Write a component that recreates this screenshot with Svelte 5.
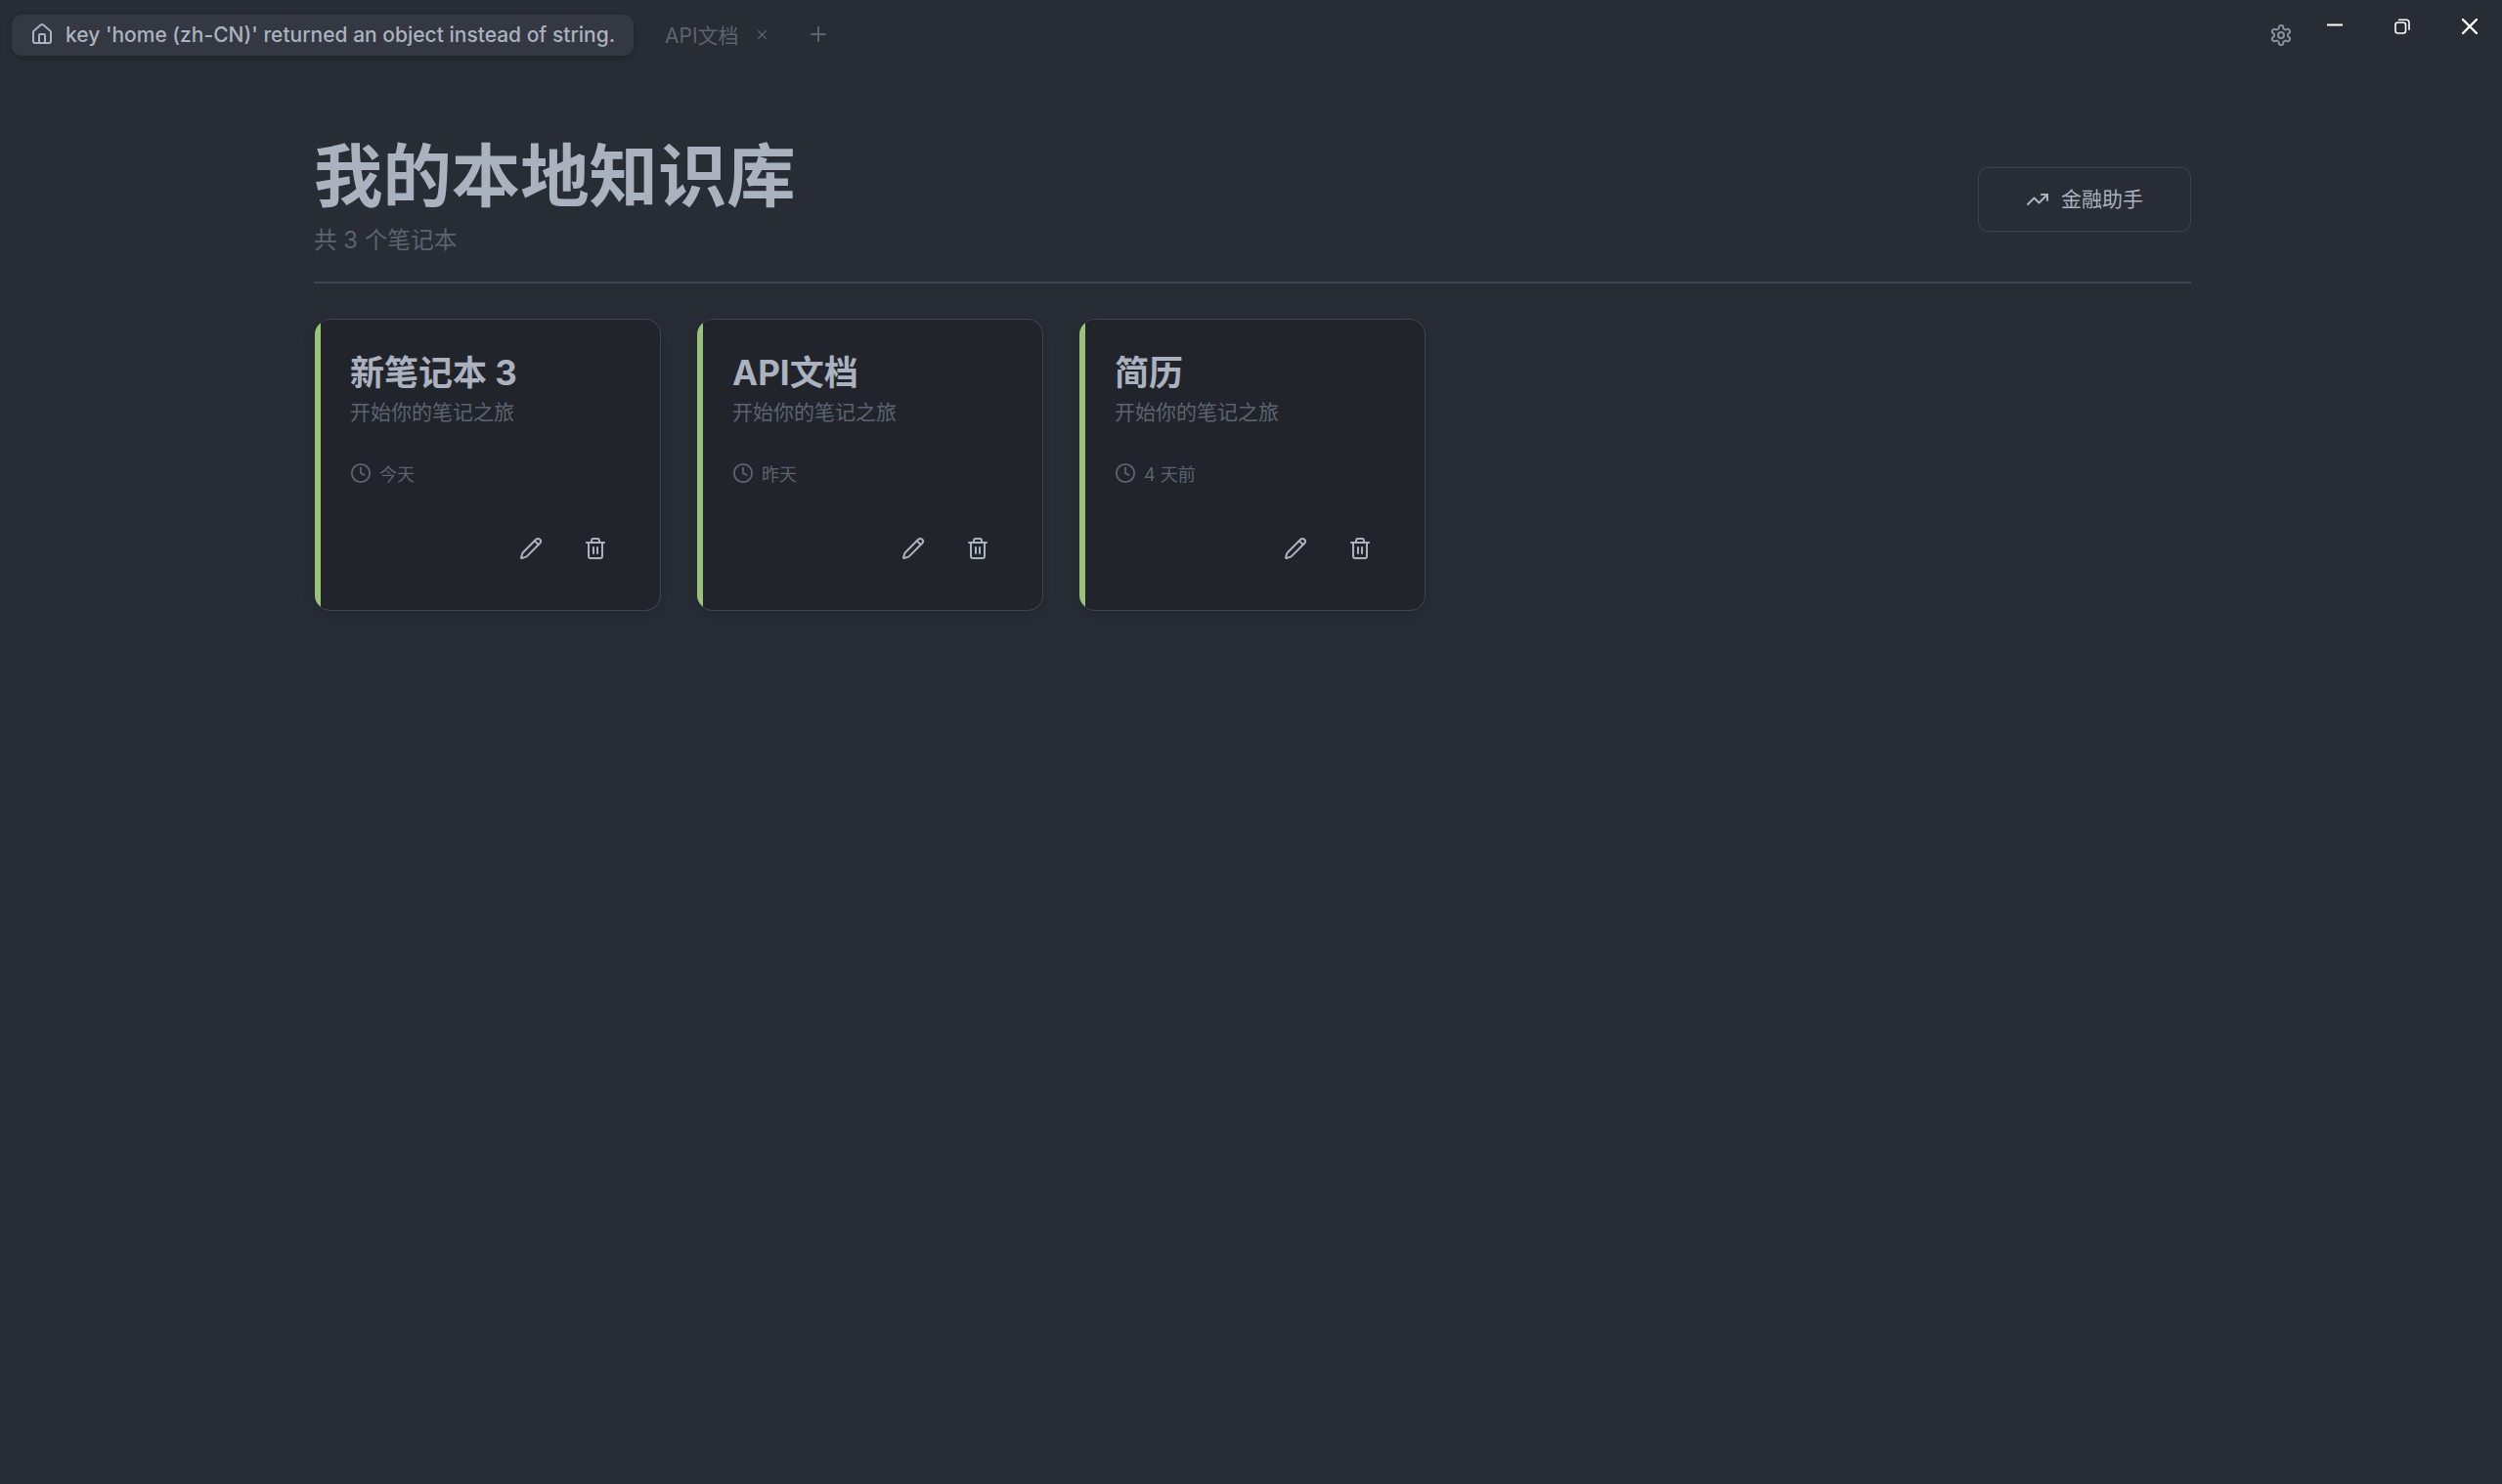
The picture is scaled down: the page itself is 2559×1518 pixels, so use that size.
<script>
  const notebooks = [
    { title: "新笔记本 3", desc: "开始你的笔记之旅", time: "今天" },
    { title: "API文档", desc: "开始你的笔记之旅", time: "昨天" },
    { title: "简历", desc: "开始你的笔记之旅", time: "4 天前" }
  ];
</script>

<div class="window">
  <header class="titlebar">
    <div class="tabs">
      <div class="tab active">
        <svg class="home" viewBox="0 0 24 24"><path d="M15 21v-8a1 1 0 0 0-1-1h-4a1 1 0 0 0-1 1v8" /><path d="M3 10a2 2 0 0 1 .709-1.528l7-5.999a2 2 0 0 1 2.582 0l7 5.999A2 2 0 0 1 21 10v9a2 2 0 0 1-2 2H5a2 2 0 0 1-2-2z" /></svg>
        <span>key 'home (zh-CN)' returned an object instead of string.</span>
      </div>
      <div class="tab other">
        <span>API文档</span>
        <svg class="tabx" viewBox="0 0 24 24"><path d="M18 6 6 18" /><path d="m6 6 12 12" /></svg>
      </div>
      <svg class="plus" viewBox="0 0 24 24"><path d="M5 12h14" /><path d="M12 5v14" /></svg>
    </div>
    <div class="controls">
      <svg class="gear" viewBox="0 0 24 24"><path d="M12.22 2h-.44a2 2 0 0 0-2 2v.18a2 2 0 0 1-1 1.73l-.43.25a2 2 0 0 1-2 0l-.15-.08a2 2 0 0 0-2.73.73l-.22.38a2 2 0 0 0 .73 2.73l.15.1a2 2 0 0 1 1 1.72v.51a2 2 0 0 1-1 1.74l-.15.09a2 2 0 0 0-.73 2.73l.22.38a2 2 0 0 0 2.73.73l.15-.08a2 2 0 0 1 2 0l.43.25a2 2 0 0 1 1 1.73V20a2 2 0 0 0 2 2h.44a2 2 0 0 0 2-2v-.18a2 2 0 0 1 1-1.73l.43-.25a2 2 0 0 1 2 0l.15.08a2 2 0 0 0 2.73-.73l.22-.39a2 2 0 0 0-.73-2.73l-.15-.08a2 2 0 0 1-1-1.74v-.5a2 2 0 0 1 1-1.74l.15-.09a2 2 0 0 0 .73-2.73l-.22-.38a2 2 0 0 0-2.73-.73l-.15.08a2 2 0 0 1-2 0l-.43-.25a2 2 0 0 1-1-1.73V4a2 2 0 0 0-2-2z" /><circle cx="12" cy="12" r="3" /></svg>
      <svg class="win min" viewBox="0 0 16 16"><path d="M0.5 6.5h15" /></svg>
      <svg class="win restore" viewBox="0 0 16 16"><rect x="1" y="4" width="10.5" height="11" rx="2.5" /><path d="M4.5 1.2h7.5a3 3 0 0 1 3 3v7" /></svg>
      <svg class="win close" viewBox="0 0 16 16"><path d="M1 1l14 14" /><path d="M15 1 1 15" /></svg>
    </div>
  </header>

  <main class="content">
    <div class="head">
      <div>
        <h1>我的本地知识库</h1>
        <p class="count">共 3 个笔记本</p>
      </div>
      <button class="finance">
        <svg viewBox="0 0 24 24"><path d="M22 7 13.5 15.5 8.5 10.5 2 17" /><path d="M16 7h6v6" /></svg>
        <span>金融助手</span>
      </button>
    </div>

    <div class="grid">
      {#each notebooks as nb}
        <div class="card">
          <h2>{nb.title}</h2>
          <p class="desc">{nb.desc}</p>
          <div class="meta">
            <svg viewBox="0 0 24 24"><circle cx="12" cy="12" r="10" /><path d="M12 6v6l4 2" /></svg>
            <span>{nb.time}</span>
          </div>
          <div class="actions">
            <svg class="pencil" viewBox="0 0 24 24"><path d="M21.174 6.812a1 1 0 0 0-3.986-3.987L3.842 16.174a2 2 0 0 0-.5.83l-1.321 4.352a.5.5 0 0 0 .623.622l4.353-1.32a2 2 0 0 0 .83-.497z" /><path d="m16.2 4.6 3.2 3.2" /></svg>
            <svg viewBox="0 0 24 24"><path d="M3 6h18" /><path d="M19 6v14a2 2 0 0 1-2 2H7a2 2 0 0 1-2-2V6" /><path d="M8 6V4a2 2 0 0 1 2-2h4a2 2 0 0 1 2 2v2" /><path d="M10 11v6" /><path d="M14 11v6" /></svg>
          </div>
        </div>
      {/each}
    </div>
  </main>
</div>

<style>
  :global(body) {
    margin: 0;
    background: #282c34;
  }

  .window {
    width: 2559px;
    height: 1518px;
    background: #282c34;
    color: #abb2bf;
    font-family: Inter, "Noto Sans CJK SC", sans-serif;
    overflow: hidden;
  }

  svg {
    fill: none;
    stroke: currentColor;
    stroke-width: 2;
    stroke-linecap: round;
    stroke-linejoin: round;
    flex: none;
    display: block;
  }

  .titlebar {
    display: flex;
    justify-content: space-between;
    align-items: flex-start;
    height: 72px;
  }

  .tabs {
    display: flex;
    align-items: center;
    padding: 15px 0 0 12px;
  }

  .tab {
    display: flex;
    align-items: center;
    box-sizing: border-box;
    height: 42px;
    padding-bottom: 2px;
    font-size: 21px;
  }

  .tab.active {
    width: 636px;
    padding-left: 19px;
    gap: 12px;
    background: #333842;
    border-radius: 10px;
    box-shadow: 0 2px 6px rgba(0, 0, 0, 0.2);
    font-weight: 500;
    white-space: nowrap;
  }

  .home {
    width: 24px;
    height: 24px;
  }

  .tab.other {
    margin-left: 32px;
    color: #5c6370;
    gap: 16px;
  }

  .tabx {
    width: 15px;
    height: 15px;
  }

  .plus {
    width: 24px;
    height: 24px;
    margin-left: 38px;
    margin-bottom: 2px;
    color: #5c6370;
  }

  .controls {
    display: flex;
    align-items: flex-start;
    padding-right: 25px;
  }

  .gear {
    width: 24px;
    height: 24px;
    margin-top: 24px;
    color: #8a919e;
  }

  .win {
    width: 16px;
    height: 16px;
    margin-top: 19px;
    color: #fff;
  }

  .min {
    margin-left: 35px;
  }

  .restore {
    margin-left: 53px;
    stroke-width: 1.6;
  }

  .close {
    margin-left: 53px;
    stroke-width: 2.4;
  }

  .content {
    padding: 67px 318px 0 321px;
  }

  .head {
    display: flex;
    justify-content: space-between;
    align-items: center;
    padding-bottom: 27px;
    border-bottom: 2px solid #3e4451;
  }

  h1 {
    margin: 0;
    font-size: 70.4px;
    line-height: 84px;
    font-weight: 700;
  }

  .count {
    margin: 8px 0 0;
    font-size: 23.7px;
    line-height: 30px;
    color: #5c6370;
  }

  .finance {
    display: flex;
    align-items: center;
    justify-content: center;
    gap: 12px;
    width: 218px;
    height: 66px;
    margin-top: 8px;
    background: transparent;
    border: 1px solid #3e4451;
    border-radius: 10px;
    color: #abb2bf;
    font: inherit;
    font-size: 21px;
  }

  .finance span {
    padding-bottom: 4px;
  }

  .finance svg {
    width: 24px;
    height: 24px;
  }

  .grid {
    display: flex;
    gap: 37px;
    margin-top: 36px;
    padding-left: 1px;
  }

  .card {
    position: relative;
    overflow: hidden;
    width: 354px;
    height: 299px;
    box-sizing: border-box;
    padding: 32px 36px 0 36px;
    background: #21252b;
    border: 1px solid #3e4451;
    border-left: none;
    border-radius: 16px;
    box-shadow: 0 4px 14px rgba(0, 0, 0, 0.15);
  }

  .card::before {
    content: "";
    position: absolute;
    left: 0;
    top: 0;
    bottom: 0;
    width: 6px;
    background: #98c379;
  }

  h2 {
    margin: 0;
    font-size: 35px;
    line-height: 44px;
    font-weight: 700;
  }

  .desc {
    margin: 4px 0 0;
    font-size: 21px;
    line-height: 30px;
    color: #5c6370;
  }

  .meta {
    display: flex;
    align-items: center;
    gap: 8px;
    margin-top: 34px;
    font-size: 18px;
    color: #5c6370;
  }

  .meta svg {
    width: 22px;
    height: 22px;
  }

  .actions {
    display: flex;
    justify-content: flex-end;
    gap: 42px;
    margin-top: 52px;
    padding-right: 18px;
  }

  .actions svg {
    width: 24px;
    height: 24px;
  }
</style>
